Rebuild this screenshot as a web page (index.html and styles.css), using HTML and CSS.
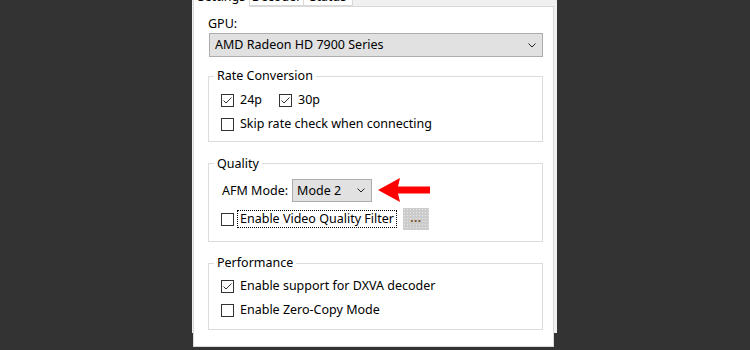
FILE: index.html
```html
<!DOCTYPE html>
<html lang="en">
<head>
    <meta charset="UTF-8">
    <title>Decoder Settings</title>
    <link rel="stylesheet" href="styles.css">
</head>
<body>
    <div class="dialog">
        <div class="tabs">
            <div class="tab active">Settings</div>
            <div class="tab">Decoder</div>
            <div class="tab">Status</div>
        </div>
        <div class="panel">
            <div class="field-label">GPU:</div>
            <div class="combo wide">
                <span>AMD Radeon HD 7900 Series</span>
                <svg class="chev" width="8" height="5" viewBox="0 0 8 5"><path d="M0.5 0.5 L4 4 L7.5 0.5" fill="none" stroke="#222" stroke-width="1"/></svg>
            </div>

            <fieldset class="group rate">
                <legend>Rate Conversion</legend>
                <div class="row">
                    <label class="check"><span class="box on"></span><span class="text">24p</span></label>
                    <label class="check spaced"><span class="box on"></span><span class="text">30p</span></label>
                </div>
                <div class="row">
                    <label class="check"><span class="box"></span><span class="text">Skip rate check when connecting</span></label>
                </div>
            </fieldset>

            <fieldset class="group quality">
                <legend>Quality</legend>
                <div class="row afm">
                    <span class="afm-label">AFM Mode:</span>
                    <div class="combo small">
                        <span>Mode 2</span>
                        <svg class="chev" width="8" height="5" viewBox="0 0 8 5"><path d="M0.5 0.5 L4 4 L7.5 0.5" fill="none" stroke="#222" stroke-width="1"/></svg>
                    </div>
                    <svg class="arrow" width="52" height="25" viewBox="0 0 52 25">
                        <polygon points="0,12 22,0 20,8.5 52,8.5 52,15.5 20,15.5 22,24" fill="#ff0000"/>
                    </svg>
                </div>
                <div class="row filter">
                    <label class="check"><span class="box"></span><span class="text focus">Enable Video Quality Filter</span></label>
                    <span class="dots-btn">...</span>
                </div>
            </fieldset>

            <fieldset class="group perf">
                <legend>Performance</legend>
                <div class="row">
                    <label class="check"><span class="box on"></span><span class="text">Enable support for DXVA decoder</span></label>
                </div>
                <div class="row">
                    <label class="check"><span class="box"></span><span class="text">Enable Zero-Copy Mode</span></label>
                </div>
            </fieldset>
        </div>
    </div>
</body>
</html>
```

FILE: styles.css
```css
* {
    margin: 0;
    padding: 0;
    box-sizing: border-box;
}

body {
    background: #333333;
    font-family: "Noto Sans", "Open Sans", sans-serif;
    font-size: 12.5px;
    line-height: 16px;
    color: #000;
    overflow: hidden;
    height: 350px;
}

.dialog {
    margin-left: 192px;
    width: 365px;
    height: 350px;
    background: #f0f0f0;
    padding: 0 3px 0 1px;
}

.tabs {
    display: flex;
    margin-top: -17px;
    height: 23px;
}

.tab {
    width: 54px;
    border: 1px solid #d9d9d9;
    border-left: none;
    background: #ffffff;
    text-align: center;
    padding-top: 4.5px;
    font-size: 12.5px;
}

.tab.active {
    width: 57px;
    border-left: 1px solid #d9d9d9;
    border-bottom-color: #fff;
    height: 24px;
}

.tab:last-child {
    width: 49px;
}

.panel {
    background: #ffffff;
    border: 1px solid #d9d9d9;
    height: 341px;
    padding: 0 10px 0 14px;
}

.field-label {
    margin-top: 9px;
}

.combo {
    display: flex;
    align-items: center;
    justify-content: space-between;
    background: #e1e1e1;
    border: 1px solid #adadad;
    padding: 0 6px 0 5px;
}

.combo.wide {
    margin-top: 1px;
    margin-left: 1px;
    height: 24px;
}

.combo.small {
    width: 80px;
    height: 23px;
    padding-left: 4px;
    margin-left: 4px;
}

.group {
    border: 1px solid #dcdcdc;
    padding: 0 0 0 12px;
    margin-top: 11px;
}

.group legend {
    margin-left: -7px;
    padding: 0 3px;
    line-height: 16px;
}

.rate {
    padding-top: 4px;
    padding-bottom: 5px;
}

.quality {
    margin-top: 13px;
    padding-bottom: 10px;
}

.quality legend {
    position: relative;
    top: 1px;
}

.perf {
    margin-top: 13px;
    padding-top: 3px;
    padding-bottom: 7px;
}

.row {
    display: flex;
    align-items: center;
    height: 24px;
}

.row.afm {
    height: 23px;
    margin-top: 8px;
}

.row.filter {
    margin-top: 5px;
}

.check {
    display: flex;
    align-items: center;
}

.check.spaced {
    margin-left: 14px;
}

.box {
    width: 13px;
    height: 13px;
    border: 1px solid #333;
    background: #fff;
    margin-right: 3px;
    position: relative;
}

.box.on::after {
    content: "";
    position: absolute;
    left: 1px;
    top: 1px;
    width: 9px;
    height: 9px;
    background: no-repeat center / 9px 9px url("data:image/svg+xml;utf8,<svg xmlns='http://www.w3.org/2000/svg' width='9' height='9' viewBox='0 0 9 9'><path d='M0.5 4.5 L3 7 L8.5 1.5' fill='none' stroke='%23333' stroke-width='1'/></svg>");
}

.text {
    padding: 0 2px;
    border: 1px dotted transparent;
}

.text.focus {
    border-color: #000;
}

.afm-label {
    margin-left: 1px;
}

.arrow {
    margin-left: 6px;
}

.dots-btn {
    margin-left: 6px;
    width: 26px;
    height: 22px;
    background-color: #cccccc;
    background-image: radial-gradient(circle, #e6e6e6 0.6px, transparent 0.8px);
    background-size: 3px 3px;
    color: #7a5020;
    font-size: 12px;
    font-weight: bold;
    line-height: 20px;
    text-align: center;
    letter-spacing: 0.5px;
}
```
